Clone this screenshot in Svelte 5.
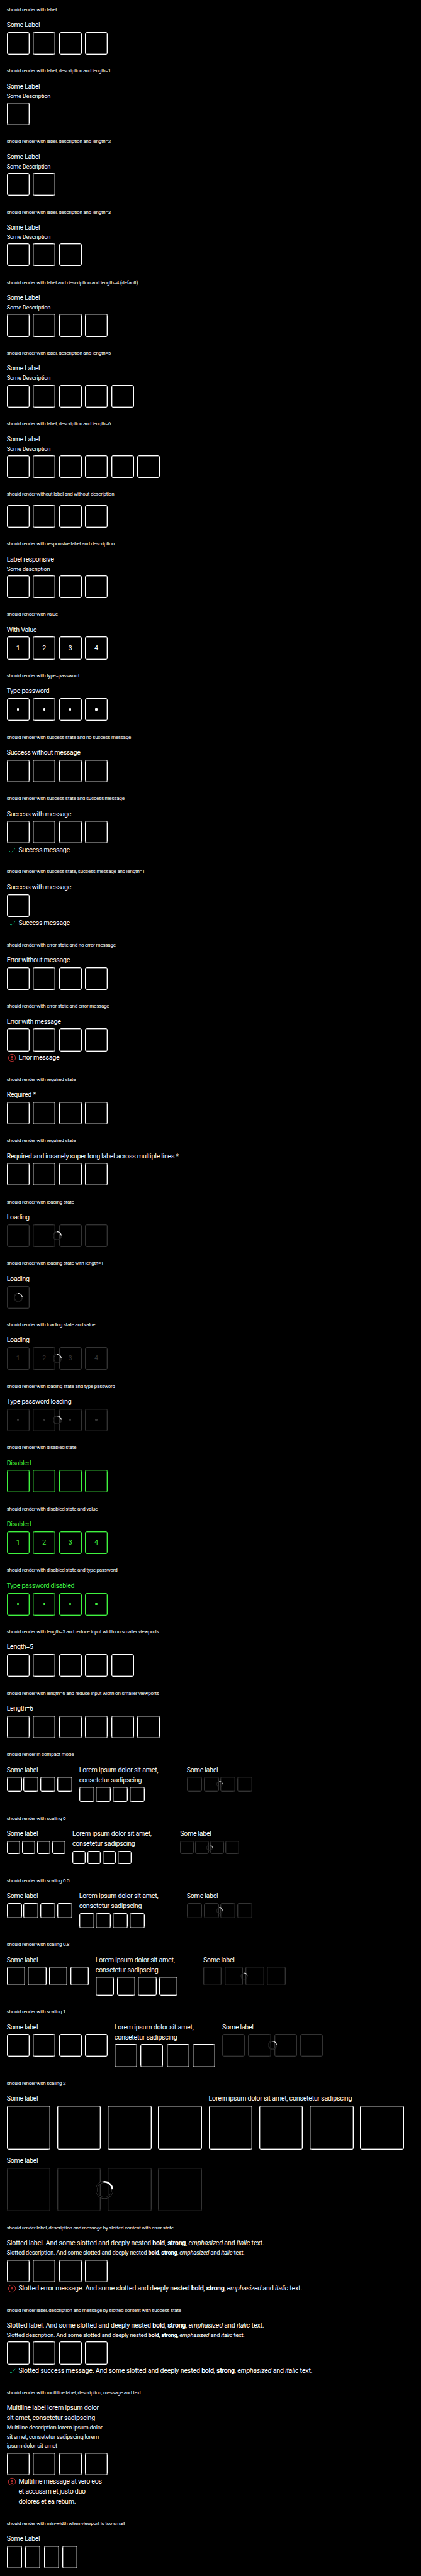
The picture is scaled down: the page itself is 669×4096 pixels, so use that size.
<script>
  const std = { n: 4, w: 54, gap: 8, spin: 21 };
  const slotted = [
    ['', '. And some slotted and deeply nested '],
    ['b', 'bold'],
    ['', ', '],
    ['b', 'strong'],
    ['', ', '],
    ['i', 'emphasized'],
    ['', ' and '],
    ['i', 'italic'],
    ['', ' text.']
  ];
  const rich = (lead) => [['', lead + slotted[0][1]], ...slotted.slice(1)];
  const plain = (text) => [['', text]];

  function field(label, options = {}) {
    const f = { ...std, ...options };
    f.label = typeof label === 'string' ? plain(label) : label;
    if (typeof f.desc === 'string') f.desc = plain(f.desc);
    if (typeof f.msg === 'string') f.msg = plain(f.msg);
    return f;
  }

  const one = (title, label, options) => ({ title, rows: [[field(label, options)]] });

  const lorem = 'Lorem ipsum dolor sit amet,\nconsetetur sadipscing';
  function scaled(title, w, gap, spin) {
    const size = { w, gap, spin };
    return {
      title,
      rows: [[
        field('Some label', size),
        field(lorem, { ...size, max: 240 }),
        field('Some label', { ...size, loading: true })
      ]]
    };
  }
  const big = { w: 104, gap: 16, spin: 42 };
  const digits = ['1', '2', '3', '4'];
  const dots = ['•', '•', '•', '•'];

  const sections = [
    one('should render with label', 'Some Label'),
    one('should render with label, description and length=1', 'Some Label', { desc: 'Some Description', n: 1 }),
    one('should render with label, description and length=2', 'Some Label', { desc: 'Some Description', n: 2 }),
    one('should render with label, description and length=3', 'Some Label', { desc: 'Some Description', n: 3 }),
    one('should render with label and description and length=4 (default)', 'Some Label', { desc: 'Some Description' }),
    one('should render with label, description and length=5', 'Some Label', { desc: 'Some Description', n: 5 }),
    one('should render with label, description and length=6', 'Some Label', { desc: 'Some Description', n: 6 }),
    one('should render without label and without description', null),
    one('should render with responsive label and description', 'Label responsive', { desc: 'Some description' }),
    one('should render with value', 'With Value', { value: digits }),
    one('should render with type=password', 'Type password', { value: dots }),
    one('should render with success state and no success message', 'Success without message'),
    one('should render with success state and success message', 'Success with message', { state: 'success', msg: 'Success message' }),
    one('should render with success state, success message and length=1', 'Success with message', { n: 1, state: 'success', msg: 'Success message' }),
    one('should render with error state and no error message', 'Error without message'),
    one('should render with error state and error message', 'Error with message', { state: 'error', msg: 'Error message' }),
    one('should render with required state', 'Required *'),
    one('should render with required state', 'Required and insanely super long label across multiple lines *'),
    one('should render with loading state', 'Loading', { loading: true }),
    one('should render with loading state with length=1', 'Loading', { loading: true, n: 1 }),
    one('should render with loading state and value', 'Loading', { loading: true, value: digits }),
    one('should render with loading state and type password', 'Type password loading', { loading: true, value: dots }),
    one('should render with disabled state', 'Disabled', { disabled: true }),
    one('should render with disabled state and value', 'Disabled', { disabled: true, value: digits }),
    one('should render with disabled state and type password', 'Type password disabled', { disabled: true, value: dots }),
    one('should render with length=5 and reduce input width on smaller viewports', 'Length=5', { n: 5 }),
    one('should render with length=6 and reduce input width on smaller viewports', 'Length=6', { n: 6 }),
    scaled('should render in compact mode', 36, 4, 15),
    scaled('should render with scaling 0', 32, 4, 15),
    scaled('should render with scaling 0.5', 36, 4, 15),
    scaled('should render with scaling 0.8', 44, 6.4, 16.8),
    scaled('should render with scaling 1', 54, 8, 21),
    {
      title: 'should render with scaling 2',
      rows: [
        [field('Some label', big), field('Lorem ipsum dolor sit amet, consetetur sadipscing', big)],
        [field('Some label', { ...big, loading: true })]
      ]
    },
    one('should render label, description and message by slotted content with error state', rich('Slotted label'), {
      desc: rich('Slotted description'), state: 'error', msg: rich('Slotted error message')
    }),
    one('should render label, description and message by slotted content with success state', rich('Slotted label'), {
      desc: rich('Slotted description'), state: 'success', msg: rich('Slotted success message')
    }),
    one('should render with multiline label, description, message and text', 'Multiline label lorem ipsum dolor\nsit amet, consetetur sadipscing', {
      desc: 'Multiline description lorem ipsum dolor\nsit amet, consetetur sadipscing lorem\nipsum dolor sit amet',
      state: 'error',
      msg: 'Multiline message at vero eos\net accusam et justo duo\ndolores et ea rebum.'
    }),
    one('should render with min-width when viewport is too small', 'Some Label', { w: 36, h: 54 })
  ];
</script>

{#snippet runs(parts)}{#each parts as [kind, text]}{#if kind === 'b'}<b>{text}</b>{:else if kind === 'i'}<i>{text}</i>{:else}{text}{/if}{/each}{/snippet}

<main>
  {#each sections as s}
    <section>
      <h2>{s.title}</h2>
      <div class="rows">
        {#each s.rows as row}
          <div class="row">
            {#each row as f}
              <div
                class="field"
                class:loading={f.loading}
                class:disabled={f.disabled}
                class:rich={f.label?.length > 1}
                style="--w:{f.w};--h:{f.h ?? f.w};--gap:{f.gap};--max:{f.max ?? 0};--spin:{f.spin}"
              >
                {#if f.label}<div class="label" class:long={f.label[0][1].length > 25}>{@render runs(f.label)}</div>{/if}
                {#if f.desc}<div class="desc">{@render runs(f.desc)}</div>{/if}
                <div class="boxes" class:spaced={f.label}>
                  {#each { length: f.n } as _, i}
                    <div class="box">
                      {#if f.value?.[i] === '•'}<span class="dot"></span>{:else if f.value}{f.value[i]}{/if}
                    </div>
                  {/each}
                  {#if f.loading}
                    <svg class="spinner" viewBox="0 0 42 42" fill="none">
                      <circle cx="21" cy="21" r="19" stroke="#4c4c4c" stroke-width="4" />
                      <circle cx="21" cy="21" r="19" stroke="#000" stroke-width="2.7" />
                      <path d="M18.8 2.2A19 19 0 0 1 39.9 19.6" stroke="#fff" stroke-width="3.8" />
                    </svg>
                  {/if}
                </div>
                {#if f.msg}
                  <div class="msg">
                    <svg class="icon" viewBox="0 0 24 24" fill="none">
                      {#if f.state === 'error'}
                        <circle cx="12" cy="12" r="8.5" stroke="#fc4040" stroke-width="1.1" />
                        <path d="M11 7.5h2v5.8h-2zM11 14.7h2v1.9h-2z" fill="#fc4040" />
                      {:else}
                        <path d="M5.2 12.6l4.6 4.7L19.8 7.4" stroke="#09d087" stroke-width="1.1" />
                      {/if}
                    </svg>
                    <div>{@render runs(f.msg)}</div>
                  </div>
                {/if}
              </div>
            {/each}
          </div>
        {/each}
      </div>
    </section>
  {/each}
</main>

<style>
  :global(html),
  :global(body) {
    background: #000;
  }
  main {
    --u: 0.6687px;
    height: 4096px;
    overflow: hidden;
    background: #000;
    color: #fff;
    font: calc(16 * var(--u)) / calc(24 * var(--u)) Roboto, 'Liberation Sans', sans-serif;
    letter-spacing: -0.031em;
  }
  section {
    padding: calc(16 * var(--u));
  }
  h2 {
    margin: 0 0 calc(16 * var(--u));
    font-size: calc(12 * var(--u));
    font-weight: 400;
    line-height: calc(16 * var(--u));
    letter-spacing: -0.028em;
    white-space: nowrap;
  }
  .rows,
  .row {
    display: flex;
    gap: calc(16 * var(--u));
  }
  .rows {
    flex-direction: column;
  }
  .row {
    align-items: flex-start;
  }
  .field {
    display: flex;
    flex-direction: column;
    align-items: flex-start;
    min-width: calc(var(--max) * var(--u));
  }
  .label,
  .desc,
  .msg {
    white-space: pre;
  }
  .long {
    letter-spacing: -0.025em;
  }
  .desc {
    font-size: calc(14 * var(--u));
    line-height: calc(21.8 * var(--u));
    letter-spacing: -0.0287em;
  }
  .rich .label {
    letter-spacing: -0.0155em;
  }
  .rich .msg {
    letter-spacing: -0.0186em;
  }
  .rich .desc {
    letter-spacing: -0.0228em;
  }
  .rich b {
    letter-spacing: -0.034em;
  }
  .boxes {
    position: relative;
    display: flex;
    gap: calc(var(--gap) * var(--u));
  }
  .spaced {
    margin-top: calc(4 * var(--u));
  }
  .box {
    box-sizing: border-box;
    display: flex;
    align-items: center;
    justify-content: center;
    width: calc(var(--w) * var(--u));
    height: calc(var(--h) * var(--u));
    border: 1px solid currentColor;
    border-radius: calc(4 * var(--u));
    box-shadow: inset 0 0 0 1px color-mix(in srgb, currentColor 38%, transparent);
    letter-spacing: 0;
  }
  .loading .box {
    color: #333;
  }
  .disabled {
    color: #3ff23f;
  }
  .dot {
    width: calc(5 * var(--u));
    height: calc(5 * var(--u));
    border-radius: calc(1.5 * var(--u));
    background: currentColor;
  }
  .spinner {
    position: absolute;
    top: 50%;
    left: 50%;
    width: calc(var(--spin) * var(--u));
    height: calc(var(--spin) * var(--u));
    transform: translate(-50%, -50%);
  }
  .msg {
    display: flex;
    gap: calc(4 * var(--u));
    margin-top: calc(4 * var(--u));
  }
  .icon {
    flex: none;
    width: calc(24 * var(--u));
    height: calc(24 * var(--u));
  }
  b {
    font-weight: 700;
  }
  i {
    font-style: italic;
  }
</style>
